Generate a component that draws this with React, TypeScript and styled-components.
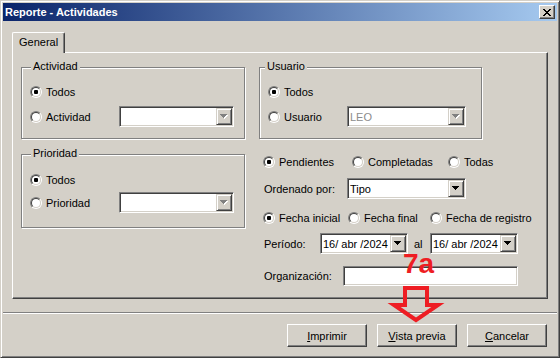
import React from "react";
import styled, { createGlobalStyle } from "styled-components";

const GlobalStyle = createGlobalStyle`
  html, body { margin: 0; padding: 0; background: #d4d0c8; overflow: hidden; }
  * { box-sizing: border-box; }
`;

const Window = styled.div`
  position: relative;
  width: 560px;
  height: 358px;
  background: #d4d0c8;
  border: 1px solid;
  border-color: #d4d0c8 #404040 #404040 #d4d0c8;
  box-shadow: inset 1px 1px #fff, inset -1px -1px #808080;
  padding: 2px;
  display: flex;
  flex-direction: column;
  font-family: "Liberation Sans", Arial, sans-serif;
  font-size: 11px;
  color: #000;
`;

const TitleBar = styled.div`
  height: 18px;
  flex: none;
  display: flex;
  align-items: center;
  justify-content: space-between;
  padding: 0 2px;
  background: linear-gradient(to right, #0a246a, #a6caf0);
`;

const Title = styled.span`
  color: #fff;
  font-weight: bold;
  font-size: 11px;
  line-height: 13px;
  padding-top: 1px;
`;

const CloseButton = styled.span`
  width: 16px;
  height: 14px;
  background: #d4d0c8;
  border: 1px solid;
  border-color: #fff #404040 #404040 #fff;
  box-shadow: inset -1px -1px #808080;
  display: flex;
  align-items: center;
  justify-content: center;
`;

const Body = styled.div`
  padding: 11px 9px 0 9px;
  display: flex;
  flex-direction: column;
`;

const TabHeader = styled.div`
  display: flex;
  height: 20px;
`;

const Tab = styled.div`
  position: relative;
  z-index: 1;
  width: 53px;
  height: 21px;
  background: #d4d0c8;
  border-left: 1px solid #fff;
  border-top: 1px solid #fff;
  border-right: 1px solid #404040;
  border-top-left-radius: 2px;
  border-top-right-radius: 2px;
  box-shadow: inset -1px 0 #808080;
  padding: 2px 0 0 6px;
  line-height: 14px;
`;

const Panel = styled.div`
  width: 536px;
  height: 247px;
  border: 1px solid;
  border-color: #fff #404040 #404040 #fff;
  box-shadow: inset -1px -1px #808080;
  padding: 14px 0 0 8px;
  display: grid;
  grid-template-columns: 224px 223px;
  column-gap: 14px;
  align-items: start;
`;

const Column = styled.div<{ $gap?: number }>`
  display: flex;
  flex-direction: column;
  gap: ${(p) => p.$gap ?? 0}px;
`;

const Group = styled.div<{ $h: number; $pt: number; $gap: number }>`
  position: relative;
  height: ${(p) => p.$h}px;
  border: 1px solid #808080;
  box-shadow: inset 1px 1px #fff, 1px 1px #fff;
  padding: ${(p) => p.$pt}px 0 0 8px;
  display: flex;
  flex-direction: column;
  gap: ${(p) => p.$gap}px;
`;

const Legend = styled.span<{ $left: number }>`
  position: absolute;
  top: -8px;
  left: ${(p) => p.$left}px;
  padding: 0 2px;
  background: #d4d0c8;
  line-height: 13px;
`;

const Row = styled.div<{ $h: number; $mt?: number }>`
  height: ${(p) => p.$h}px;
  margin-top: ${(p) => p.$mt ?? 0}px;
  display: flex;
  align-items: center;
  white-space: nowrap;
`;

const Option = styled.label<{ $w?: number }>`
  display: flex;
  align-items: center;
  gap: 4px;
  ${(p) => (p.$w ? `width: ${p.$w}px; flex: none;` : "")}
  white-space: nowrap;
`;

const RadioMark = styled.span<{ $checked?: boolean }>`
  position: relative;
  width: 12px;
  height: 12px;
  flex: none;
  border-radius: 50%;
  border: 1px solid;
  border-color: #808080 #fff #fff #808080;
  &::before {
    content: "";
    position: absolute;
    inset: 0;
    border-radius: 50%;
    border: 1px solid;
    border-color: #404040 #d4d0c8 #d4d0c8 #404040;
    background: #fff;
  }
  &::after {
    content: "";
    display: ${(p) => (p.$checked ? "block" : "none")};
    position: absolute;
    left: 3px;
    top: 3px;
    width: 4px;
    height: 4px;
    border-radius: 1px;
    background: #000;
  }
`;

const FieldLabel = styled.span<{ $w: number }>`
  width: ${(p) => p.$w}px;
  flex: none;
  padding-left: 1px;
`;

const Field = styled.div<{ $w: number; $h?: number }>`
  width: ${(p) => p.$w}px;
  height: ${(p) => p.$h ?? 21}px;
  flex: none;
  border: 1px solid;
  border-color: #808080 #fff #fff #808080;
  box-shadow: inset 1px 1px #404040, inset -1px -1px #d4d0c8;
  background: #fff;
  padding: 1px;
  display: flex;
  align-items: stretch;
`;

const FieldText = styled.span<{ $disabled?: boolean }>`
  flex: 1;
  display: flex;
  align-items: center;
  padding-left: 1px;
  color: ${(p) => (p.$disabled ? "#8c8c8c" : "#000")};
  overflow: hidden;
  white-space: nowrap;
`;

const DropButton = styled.span`
  width: 16px;
  flex: none;
  background: #d4d0c8;
  border: 1px solid;
  border-color: #d4d0c8 #404040 #404040 #d4d0c8;
  box-shadow: inset 1px 1px #fff, inset -1px -1px #808080;
  display: flex;
  align-items: center;
  justify-content: center;
`;

const Joiner = styled.span`
  width: 22px;
  flex: none;
  padding-left: 6px;
`;

const FormSection = styled.div`
  margin-top: 13px;
  padding-left: 4px;
  display: flex;
  flex-direction: column;
`;

const Separator = styled.div`
  margin-top: 13px;
  height: 2px;
  border-top: 1px solid #808080;
  border-bottom: 1px solid #fff;
`;

const ButtonRow = styled.div`
  margin-top: 10px;
  padding-right: 10px;
  display: flex;
  justify-content: flex-end;
  gap: 10px;
`;

const PushButton = styled.button`
  width: 80px;
  height: 23px;
  padding: 0;
  margin: 0;
  font: inherit;
  color: #000;
  background: #d4d0c8;
  border: 1px solid;
  border-color: #fff #404040 #404040 #fff;
  box-shadow: inset -1px -1px #808080;
  display: flex;
  align-items: center;
  justify-content: center;
`;

const Annotation = styled.span`
  position: absolute;
  left: 402px;
  top: 249px;
  font-family: "Liberation Sans", Arial, sans-serif;
  font-weight: bold;
  font-size: 28px;
  line-height: 28px;
  color: #ee1d23;
  z-index: 5;
`;

const ArrowMark = styled.svg`
  position: absolute;
  left: 384px;
  top: 279px;
  z-index: 5;
`;

const ArrowGlyph: React.FC<{ disabled?: boolean }> = ({ disabled }) => (
  <svg width="8" height="5" viewBox="0 0 8 5" shapeRendering="crispEdges">
    {disabled && (
      <path d="M1 1h7v1H1z M2 2h5v1H2z M3 3h3v1H3z M4 4h1v1H4z" fill="#fff" />
    )}
    <path
      d="M0 0h7v1H0z M1 1h5v1H1z M2 2h3v1H2z M3 3h1v1H3z"
      fill={disabled ? "#808080" : "#000"}
    />
  </svg>
);

const Combo: React.FC<{ w: number; value?: string; disabled?: boolean }> = ({
  w,
  value,
  disabled,
}) => (
  <Field $w={w}>
    <FieldText $disabled={disabled}>{value}</FieldText>
    <DropButton>
      <ArrowGlyph disabled={disabled} />
    </DropButton>
  </Field>
);

const Radio: React.FC<{ label: string; checked?: boolean; w?: number }> = ({
  label,
  checked,
  w,
}) => (
  <Option $w={w}>
    <RadioMark $checked={checked} />
    <span>{label}</span>
  </Option>
);

export default function App() {
  return (
    <>
      <GlobalStyle />
      <Window>
        <TitleBar>
          <Title>Reporte - Actividades</Title>
          <CloseButton>
            <svg width="8" height="7" viewBox="0 0 8 7" shapeRendering="crispEdges">
              <path
                d="M0 0h2v1H0z M6 0h2v1H6z M1 1h2v1H1z M5 1h2v1H5z M2 2h4v1H2z M3 3h2v1H3z M2 4h4v1H2z M1 5h2v1H1z M5 5h2v1H5z M0 6h2v1H0z M6 6h2v1H6z"
                fill="#000"
              />
            </svg>
          </CloseButton>
        </TitleBar>

        <Body>
          <TabHeader>
            <Tab>General</Tab>
          </TabHeader>
          <Panel>
            <Column $gap={15}>
              <Group $h={72} $pt={14} $gap={4}>
                <Legend $left={9}>Actividad</Legend>
                <Row $h={20}>
                  <Radio label="Todos" checked w={89} />
                </Row>
                <Row $h={21}>
                  <Radio label="Actividad" w={89} />
                  <Combo w={115} disabled />
                </Row>
              </Group>
              <Group $h={74} $pt={15} $gap={2}>
                <Legend $left={9}>Prioridad</Legend>
                <Row $h={20}>
                  <Radio label="Todos" checked w={89} />
                </Row>
                <Row $h={21}>
                  <Radio label="Prioridad" w={89} />
                  <Combo w={115} disabled />
                </Row>
              </Group>
            </Column>

            <Column>
              <Group $h={72} $pt={14} $gap={4}>
                <Legend $left={5}>Usuario</Legend>
                <Row $h={20}>
                  <Radio label="Todos" checked w={79} />
                </Row>
                <Row $h={21}>
                  <Radio label="Usuario" w={79} />
                  <Combo w={119} value="LEO" disabled />
                </Row>
              </Group>

              <FormSection>
                <Row $h={20}>
                  <Radio label="Pendientes" checked w={89} />
                  <Radio label="Completadas" w={96} />
                  <Radio label="Todas" />
                </Row>
                <Row $h={21} $mt={6}>
                  <FieldLabel $w={84}>Ordenado por:</FieldLabel>
                  <Combo w={119} value="Tipo" />
                </Row>
                <Row $h={20} $mt={9}>
                  <Radio label="Fecha inicial" checked w={85} />
                  <Radio label="Fecha final" w={82} />
                  <Radio label="Fecha de registro" />
                </Row>
                <Row $h={21} $mt={5}>
                  <FieldLabel $w={57}>Período:</FieldLabel>
                  <Combo w={88} value="16/ abr /2024" />
                  <Joiner>al</Joiner>
                  <Combo w={88} value="16/ abr /2024" />
                </Row>
                <Row $h={20} $mt={12}>
                  <FieldLabel $w={80}>Organización:</FieldLabel>
                  <Field $w={175} $h={20}>
                    <FieldText />
                  </Field>
                </Row>
              </FormSection>
            </Column>
          </Panel>
        </Body>

        <Separator />

        <ButtonRow>
          <PushButton>
            <span>
              <u>I</u>mprimir
            </span>
          </PushButton>
          <PushButton>
            <span>
              <u>V</u>ista previa
            </span>
          </PushButton>
          <PushButton>
            <span>
              <u>C</u>ancelar
            </span>
          </PushButton>
        </ButtonRow>

        <Annotation>7a</Annotation>
        <ArrowMark width="64" height="48" viewBox="0 0 64 48">
          <polygon
            points="20,8 42,8 42,25 53,25 31,40 9,25 20,25"
            fill="none"
            stroke="#ee1d23"
            strokeWidth="4"
            strokeLinejoin="miter"
          />
        </ArrowMark>
      </Window>
    </>
  );
}
